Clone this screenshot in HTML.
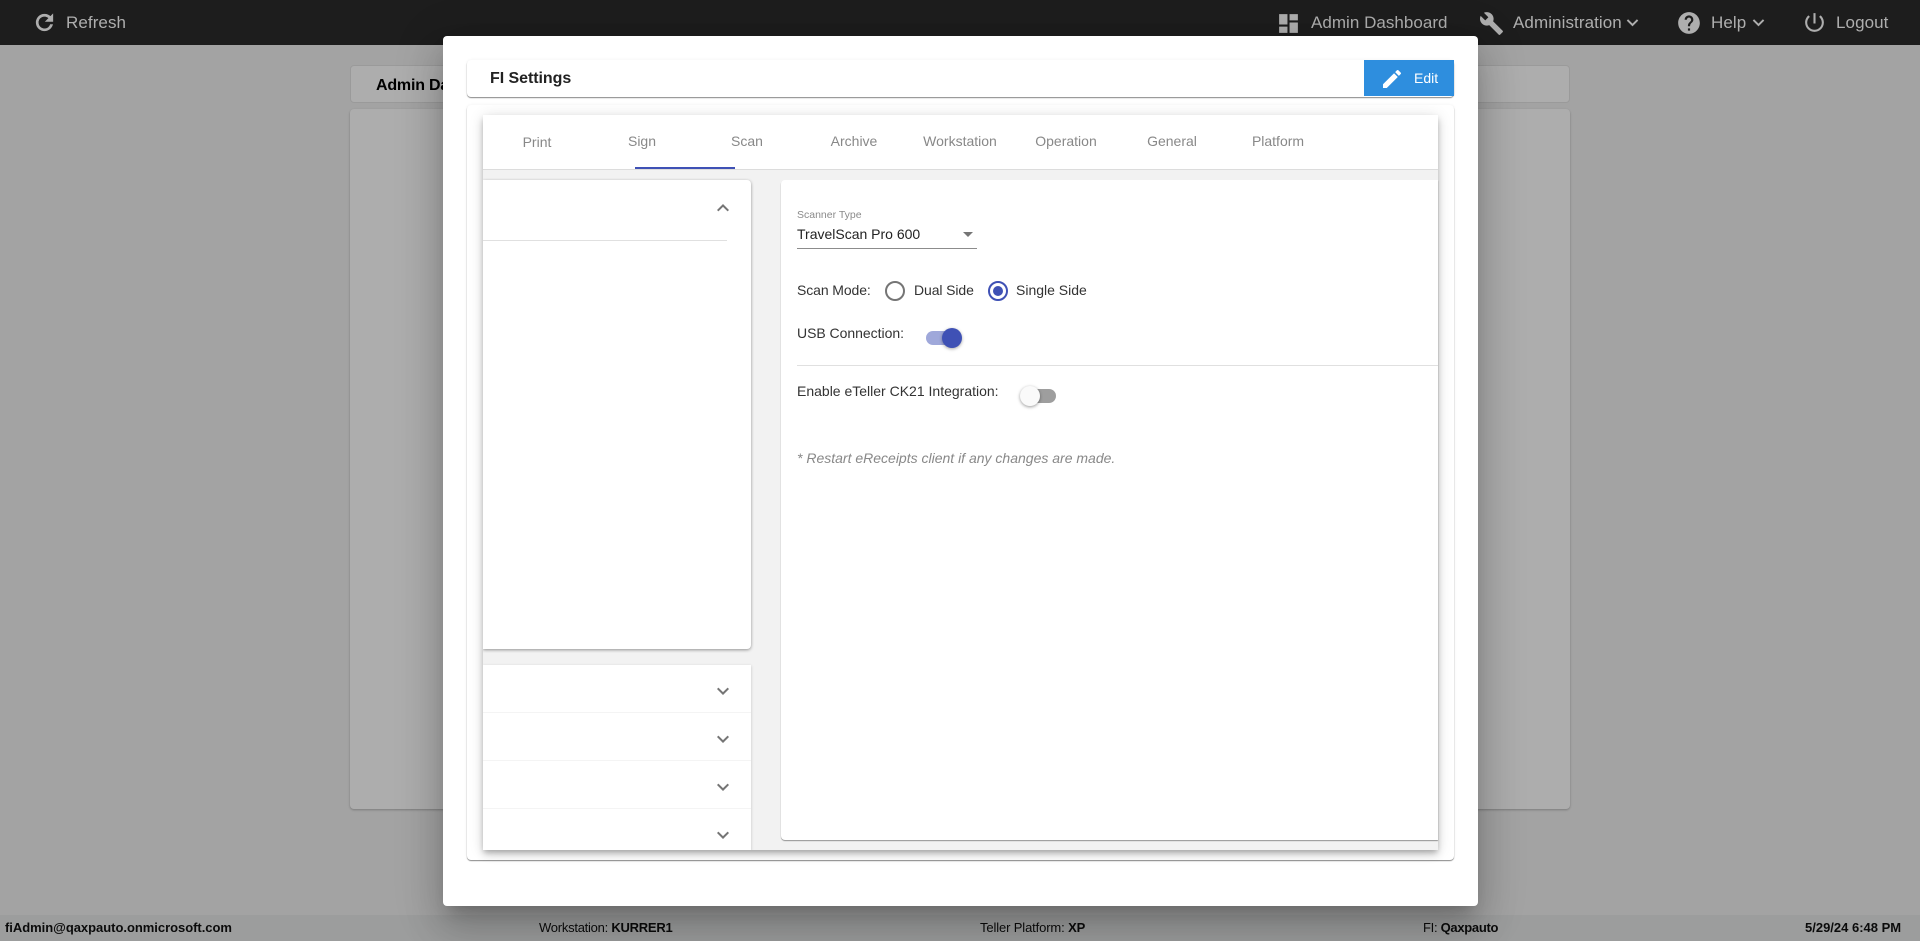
<!DOCTYPE html>
<html lang="en"><head><meta charset="utf-8"><title>FI Settings</title>
<style>
html,body{margin:0;padding:0;width:1920px;height:941px;overflow:hidden;background:#f0f0f0;font-family:"Liberation Sans",sans-serif}
div,span,svg{position:absolute;box-sizing:border-box}
b{font-weight:700}
.t{white-space:nowrap;height:20px;line-height:20px}
.nav{color:#aeaeae;font-size:17px;letter-spacing:.08px}
.tab{color:#888;font-size:14px;width:106px;text-align:center}
.ft{font-size:13px;color:#111;top:918px}
.card{background:#fff;border-radius:4px}
.sh{box-shadow:0 2px 1px -1px rgba(0,0,0,.2),0 1px 1px 0 rgba(0,0,0,.14),0 1px 3px 0 rgba(0,0,0,.12)}
.row{left:0;width:268px;height:1px;background:#f4f4f4}
</style></head><body>
<!-- background page -->
<div class="card" style="left:350px;top:65px;width:1220px;height:38px;border:1px solid #e4e4e4"></div>
<div class="t" style="left:376px;top:76px;font-size:16px;font-weight:700;color:#000;letter-spacing:-.2px">Admin Dashboard</div>
<div class="card sh" style="left:350px;top:109px;width:1220px;height:700px;box-shadow:0 1px 2px rgba(0,0,0,.25)"></div>
<div style="left:0;top:915px;width:1920px;height:26px;background:#e6e8e8"></div>
<div class="t ft" style="left:5px;font-weight:700;letter-spacing:-.03px">fiAdmin@qaxpauto.onmicrosoft.com</div>
<div class="t ft" style="left:539px;letter-spacing:-.25px">Workstation: <b>KURRER1</b></div>
<div class="t ft" style="left:980px;letter-spacing:-.13px">Teller Platform: <b>XP</b></div>
<div class="t ft" style="left:1423px;letter-spacing:-.3px">FI: <b>Qaxpauto</b></div>
<div class="t ft" style="left:1805px;font-weight:700">5/29/24 6:48 PM</div>
<!-- backdrop -->
<div style="left:0;top:0;width:1920px;height:941px;background:rgba(0,0,0,.32)"></div>
<!-- top bar -->
<div style="left:0;top:0;width:1920px;height:45px;background:#1d1d1d"></div>
<svg style="left:32px;top:10px" width="25" height="25" viewBox="0 0 24 24" fill="#aeaeae" stroke="#aeaeae" stroke-width=".6"><path d="M17.65 6.35C16.2 4.9 14.21 4 12 4c-4.42 0-7.99 3.58-7.99 8s3.57 8 7.99 8c3.73 0 6.84-2.55 7.73-6h-2.08c-.82 2.33-3.04 4-5.65 4-3.31 0-6-2.69-6-6s2.69-6 6-6c1.66 0 3.14.69 4.22 1.78L13 11h7V4l-2.35 2.35z"/></svg>
<div class="t nav" style="left:66px;top:13px">Refresh</div>
<svg style="left:1276px;top:11px" width="25" height="25" viewBox="0 0 24 24" fill="#aeaeae"><path d="M3 13h8V3H3v10zm0 8h8v-6H3v6zm10 0h8V11h-8v10zm0-18v6h8V3h-8z"/></svg>
<div class="t nav" style="left:1311px;top:13px;letter-spacing:.03px">Admin Dashboard</div>
<svg style="left:1479px;top:11px" width="25" height="25" viewBox="0 0 24 24" fill="#aeaeae"><path d="M22.7 19l-9.1-9.1c.9-2.3.4-5-1.5-6.9-2-2-5-2.4-7.4-1.3L9 6 6 9 1.6 4.7C.4 7.1.9 10.1 2.9 12.1c1.9 1.9 4.6 2.4 6.9 1.5l9.1 9.1c.4.4 1 .4 1.4 0l2.3-2.3c.5-.4.5-1.1.1-1.4z"/></svg>
<div class="t nav" style="left:1513px;top:13px">Administration</div>
<svg style="left:1621px;top:11px" width="23" height="23" viewBox="0 0 24 24" fill="#aeaeae"><path d="M16.59 8.59L12 13.17 7.41 8.59 6 10l6 6 6-6z"/></svg>
<svg style="left:1676px;top:10px" width="26" height="26" viewBox="0 0 24 24" fill="#aeaeae"><path d="M12 2C6.48 2 2 6.48 2 12s4.48 10 10 10 10-4.48 10-10S17.52 2 12 2zm1 17h-2v-2h2v2zm2.07-7.75l-.9.92C13.45 12.9 13 13.5 13 15h-2v-.5c0-1.1.45-2.1 1.17-2.83l1.24-1.26c.37-.36.59-.86.59-1.41 0-1.1-.9-2-2-2s-2 .9-2 2H8c0-2.21 1.79-4 4-4s4 1.79 4 4c0 .88-.36 1.68-.93 2.25z"/></svg>
<div class="t nav" style="left:1711px;top:13px">Help</div>
<svg style="left:1747px;top:11px" width="23" height="23" viewBox="0 0 24 24" fill="#aeaeae"><path d="M16.59 8.59L12 13.17 7.41 8.59 6 10l6 6 6-6z"/></svg>
<svg style="left:1802px;top:10px" width="25" height="25" viewBox="0 0 24 24" fill="#aeaeae"><path d="M13 3h-2v10h2V3zm4.83 2.17l-1.42 1.42C17.99 7.86 19 9.81 19 12c0 3.87-3.13 7-7 7s-7-3.13-7-7c0-2.19 1.01-4.14 2.58-5.42L6.17 5.17C4.23 6.82 3 9.26 3 12c0 4.97 4.03 9 9 9s9-4.03 9-9c0-2.74-1.23-5.18-3.17-6.83z"/></svg>
<div class="t nav" style="left:1836px;top:13px">Logout</div>
<!-- modal -->
<div style="left:443px;top:36px;width:1035px;height:870px;background:#fff;border-radius:4px;box-shadow:0 11px 15px -7px rgba(0,0,0,.2),0 24px 38px 3px rgba(0,0,0,.14),0 9px 46px 8px rgba(0,0,0,.12)"></div>
<div class="card" style="left:467px;top:60px;width:987px;height:37px;box-shadow:0 1px 1px rgba(0,0,0,.45),0 0 3px rgba(0,0,0,.06)"></div>
<div class="t" style="left:490px;top:69px;font-size:16px;font-weight:700;color:#222;letter-spacing:-.05px">FI Settings</div>
<div style="left:1364px;top:60px;width:90px;height:36px;background:#2e8ede"></div>
<svg style="left:1380px;top:67px" width="24" height="24" viewBox="0 0 24 24" fill="#fff"><path d="M3 17.25V21h3.75L17.81 9.94l-3.75-3.75L3 17.25zM20.71 7.04c.39-.39.39-1.02 0-1.41l-2.34-2.34c-.39-.39-1.02-.39-1.41 0l-1.83 1.83 3.75 3.75 1.83-1.83z"/></svg>
<div class="t" style="left:1414px;top:68px;font-size:14px;color:#fff">Edit</div>
<div class="card" style="left:467px;top:105px;width:987px;height:755px;box-shadow:0 1px 1px rgba(0,0,0,.45),0 0 3px rgba(0,0,0,.06)"></div>
<div style="left:483px;top:115px;width:955px;height:735px;background:#f2f2f2;box-shadow:0 3px 5px -1px rgba(0,0,0,.2),0 5px 8px 0 rgba(0,0,0,.14),0 1px 14px 0 rgba(0,0,0,.12)"></div>
<div style="left:483px;top:115px;width:955px;height:55px;background:#fff;border-bottom:1px solid #dcdcdc"></div>
<div class="t tab" style="left:484px;top:132px">Print</div>
<div class="t tab" style="left:589px;top:131px">Sign</div>
<div class="t tab" style="left:694px;top:131px">Scan</div>
<div class="t tab" style="left:801px;top:131px">Archive</div>
<div class="t tab" style="left:907px;top:131px">Workstation</div>
<div class="t tab" style="left:1013px;top:131px">Operation</div>
<div class="t tab" style="left:1119px;top:131px">General</div>
<div class="t tab" style="left:1225px;top:131px">Platform</div>
<div style="left:635px;top:167px;width:100px;height:2px;background:#3f51b5"></div>
<!-- left panels (clipped at the card's left edge) -->
<div style="left:483px;top:170px;width:290px;height:680px;overflow:hidden">
<div style="left:0;top:10px;width:268px;height:469px;background:#fff;border-radius:0 4px 4px 0;box-shadow:0 1px 3px rgba(0,0,0,.4)"></div>
<div style="left:0;top:70px;width:244px;height:1px;background:#e0e0e0"></div>
<div style="left:0;top:495px;width:268px;height:185px;background:#fff;box-shadow:0 1px 3px rgba(0,0,0,.2)">
<div class="row" style="top:47px"></div><div class="row" style="top:95px"></div><div class="row" style="top:143px"></div>
</div>
</div>
<svg style="left:711px;top:196px" width="24" height="24" viewBox="0 0 24 24" fill="#757575"><path d="M12 8l-6 6 1.41 1.41L12 10.83l4.59 4.58L18 14z"/></svg>
<svg style="left:711px;top:679px" width="24" height="24" viewBox="0 0 24 24" fill="#757575"><path d="M16.59 8.59L12 13.17 7.41 8.59 6 10l6 6 6-6z"/></svg>
<svg style="left:711px;top:727px" width="24" height="24" viewBox="0 0 24 24" fill="#757575"><path d="M16.59 8.59L12 13.17 7.41 8.59 6 10l6 6 6-6z"/></svg>
<svg style="left:711px;top:775px" width="24" height="24" viewBox="0 0 24 24" fill="#757575"><path d="M16.59 8.59L12 13.17 7.41 8.59 6 10l6 6 6-6z"/></svg>
<svg style="left:711px;top:823px" width="24" height="24" viewBox="0 0 24 24" fill="#757575"><path d="M16.59 8.59L12 13.17 7.41 8.59 6 10l6 6 6-6z"/></svg>
<!-- right panel -->
<div style="left:781px;top:180px;width:657px;height:660px;background:#fff;border-radius:4px 0 0 4px;box-shadow:0 1px 1px rgba(0,0,0,.4)"></div>
<div class="t" style="left:797px;top:205px;font-size:10.5px;color:#8a8a8a">Scanner Type</div>
<div class="t" style="left:797px;top:224px;font-size:14px;color:#222">TravelScan Pro 600</div>
<div style="left:963px;top:232px;width:0;height:0;border-left:5px solid transparent;border-right:5px solid transparent;border-top:5px solid #757575"></div>
<div style="left:797px;top:248px;width:180px;height:1px;background:#8c8c8c"></div>
<div class="t" style="left:797px;top:280px;font-size:14px;color:#333;letter-spacing:-.1px">Scan Mode:</div>
<div style="left:885px;top:281px;width:20px;height:20px;border:2px solid #757575;border-radius:50%"></div>
<div class="t" style="left:914px;top:280px;font-size:14px;color:#333;letter-spacing:-.1px">Dual Side</div>
<div style="left:988px;top:281px;width:20px;height:20px;border:2px solid #3f51b5;border-radius:50%"></div>
<div style="left:993px;top:286px;width:10px;height:10px;background:#3f51b5;border-radius:50%"></div>
<div class="t" style="left:1016px;top:280px;font-size:14px;color:#333">Single Side</div>
<div class="t" style="left:797px;top:323px;font-size:14px;color:#333;letter-spacing:-.03px">USB Connection:</div>
<div style="left:926px;top:331px;width:34px;height:14px;background:#9fa8da;border-radius:7px"></div>
<div style="left:942px;top:328px;width:20px;height:20px;background:#3f51b5;border-radius:50%;box-shadow:0 1px 3px rgba(0,0,0,.35)"></div>
<div style="left:797px;top:365px;width:641px;height:1px;background:#e0e0e0"></div>
<div class="t" style="left:797px;top:381px;font-size:14px;color:#333">Enable eTeller CK21 Integration:</div>
<div style="left:1022px;top:389px;width:34px;height:14px;background:#9e9e9e;border-radius:7px"></div>
<div style="left:1020px;top:386px;width:20px;height:20px;background:#fafafa;border-radius:50%;box-shadow:0 1px 3px rgba(0,0,0,.4)"></div>
<div class="t" style="left:797px;top:448px;font-size:14px;font-style:italic;color:#888">* Restart eReceipts client if any changes are made.</div>
</body></html>
